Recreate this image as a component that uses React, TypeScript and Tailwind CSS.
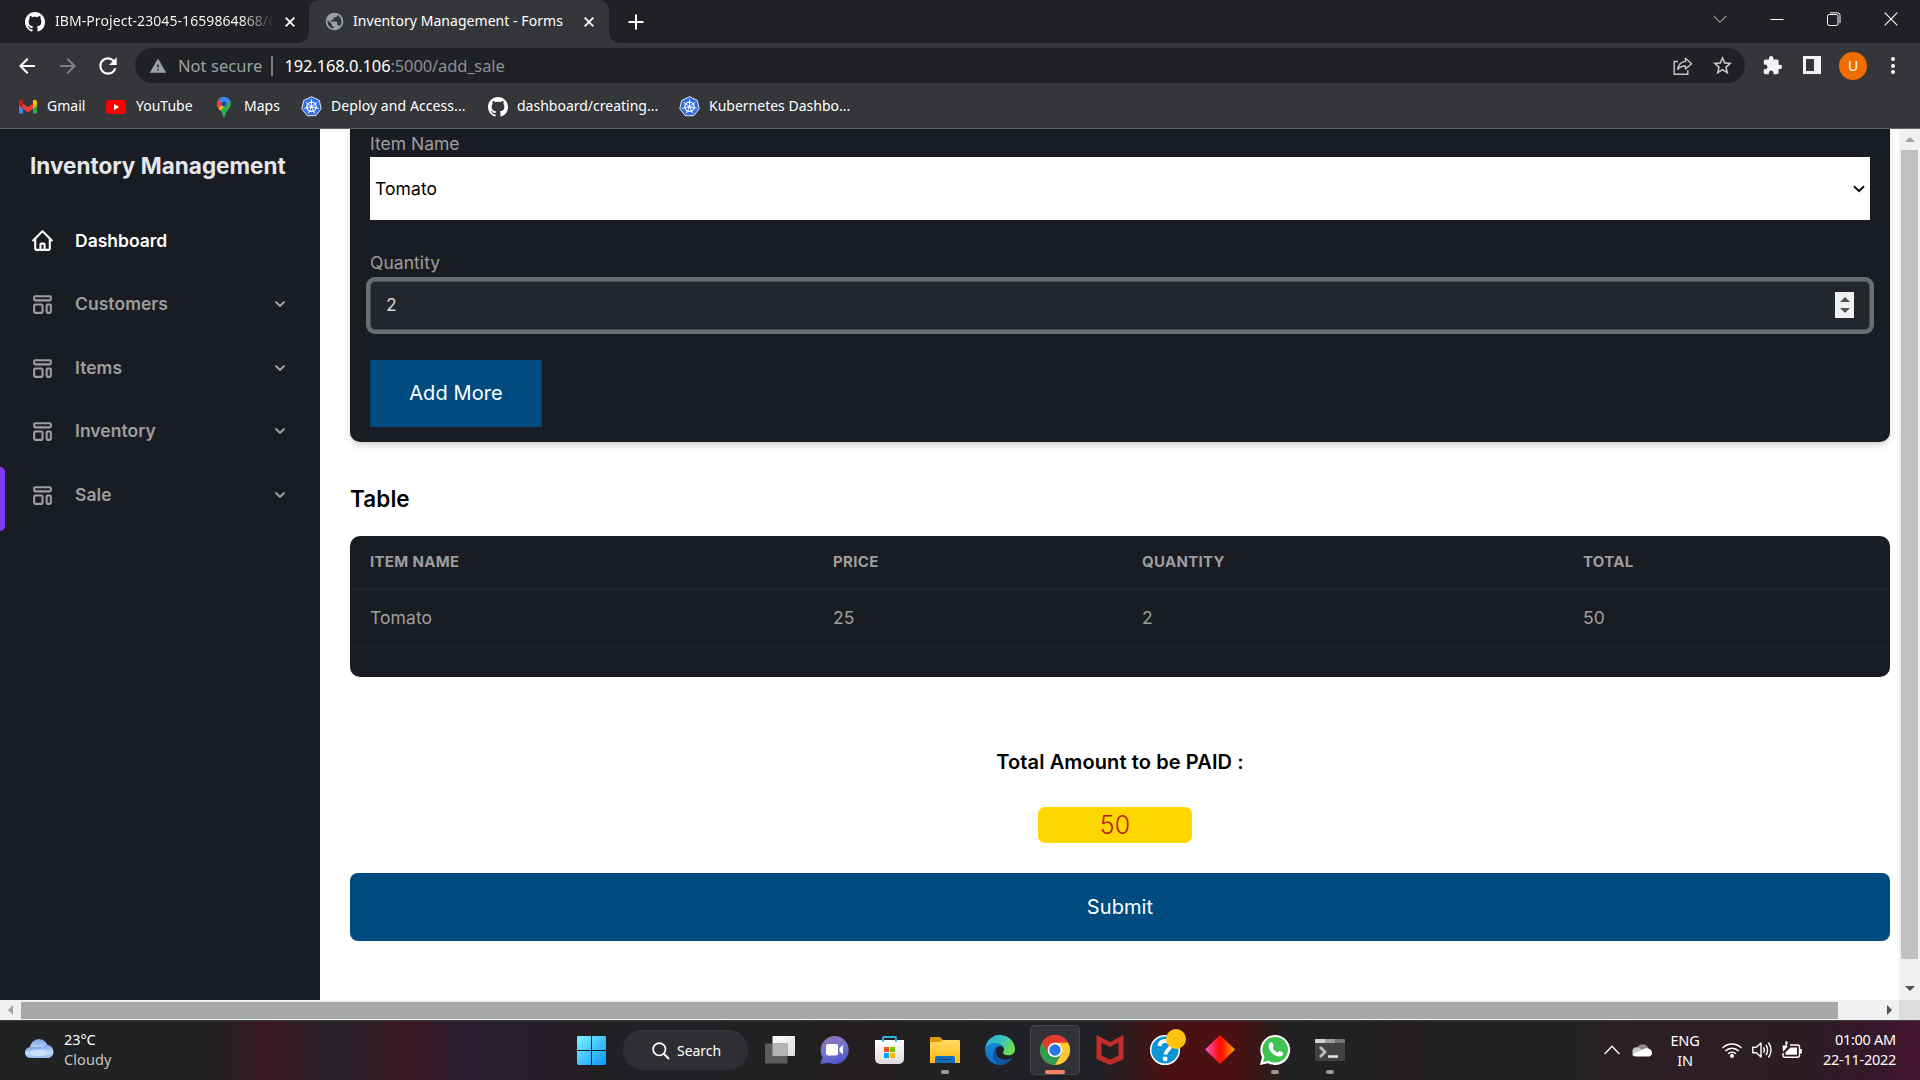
import React from 'react';
import { MdArrowBack, MdArrowForward, MdRefresh, MdWarning, MdStarBorder, MdExtension, MdPublic } from 'react-icons/md';

const GithubMark = ({ className = '' }: { className?: string }) => (
  <svg viewBox="0 0 16 16" className={`h-5 w-5 shrink-0 fill-white ${className}`}>
    <path d="M8 0C3.58 0 0 3.58 0 8c0 3.54 2.29 6.53 5.47 7.59.4.07.55-.17.55-.38 0-.19-.01-.82-.01-1.49-2.01.37-2.53-.49-2.69-.94-.09-.23-.48-.94-.82-1.13-.28-.15-.68-.52-.01-.53.63-.01 1.08.58 1.23.82.72 1.21 1.87.87 2.33.66.07-.52.28-.87.51-1.07-1.78-.2-3.64-.89-3.64-3.95 0-.87.31-1.59.82-2.15-.08-.2-.36-1.02.08-2.12 0 0 .67-.21 2.2.82.64-.18 1.32-.27 2-.27.68 0 1.36.09 2 .27 1.53-1.04 2.2-.82 2.2-.82.44 1.1.16 1.92.08 2.12.51.56.82 1.27.82 2.15 0 3.07-1.87 3.75-3.65 3.95.29.25.54.73.54 1.48 0 1.07-.01 1.93-.01 2.2 0 .21.15.46.55.38A8.013 8.013 0 0016 8c0-4.42-3.58-8-8-8z" />
  </svg>
);

const spokes = [0, 1, 2, 3, 4, 5, 6].map((i) => {
  const a = (i * 2 * Math.PI) / 7 - Math.PI / 2;
  return [12 + 8 * Math.cos(a), 12.3 + 8 * Math.sin(a)];
});

const KubeIcon = () => (
  <svg viewBox="0 0 24 24" className="h-[21px] w-[21px] shrink-0">
    <path d="M12 .8 20.9 5l2.2 9.600-6.200 7.900H7.100L.9 14.600 3.100 5z" fill="#326ce5" stroke="#fff" strokeWidth="1" strokeLinejoin="round" />
    <circle cx="12" cy="12.300" r="5.300" fill="none" stroke="#fff" strokeWidth="1.500" />
    {spokes.map(([x, y], i) => (
      <line key={i} x1="12" y1="12.300" x2={x} y2={y} stroke="#fff" strokeWidth="1.100" strokeLinecap="round" />
    ))}
    <circle cx="12" cy="12.300" r="1.500" fill="#fff" />
  </svg>
);

const CloseX = ({ className = '' }: { className?: string }) => (
  <svg viewBox="0 0 10 10" className={`h-[10px] w-[10px] shrink-0 ${className}`}>
    <path d="M.7.7l8.600 8.600M9.300.7L.7 9.300" stroke="#fff" strokeWidth="1.800" />
  </svg>
);

function TabStrip() {
  return (
    <div className="flex h-[43px] items-center bg-[#202124] text-[14px] text-white">
      <div className="flex h-full w-[309px] shrink-0 items-center pl-[25px]">
        <GithubMark />
        <div className="mb-[2px] ml-[10px] w-[219px] overflow-hidden whitespace-nowrap bg-gradient-to-r from-white from-85% to-transparent to-100% bg-clip-text tracking-[0.070px] text-transparent">
          IBM-Project-23045-1659864868/G
        </div>
        <CloseX className="ml-[11px]" />
      </div>
      <div className="relative flex h-full w-[300px] shrink-0 items-center rounded-t-[10px] bg-[#35363a] pl-4">
        <span className="absolute -left-[10px] bottom-0 h-[10px] w-[10px] bg-[radial-gradient(circle_at_0_0,#202124_9.500px,#35363a_10px)]" />
        <span className="absolute -right-[10px] bottom-0 h-[10px] w-[10px] bg-[radial-gradient(circle_at_100%_0,#202124_9.500px,#35363a_10px)]" />
        <MdPublic className="-ml-[1px] h-[21px] w-[21px] shrink-0 text-[#9aa0a6]" />
        <div className="mb-[2px] ml-[8px] w-[221px] whitespace-nowrap tracking-[0.050px]">Inventory Management - Forms</div>
        <CloseX className="ml-[10px]" />
      </div>
      <svg viewBox="0 0 16 16" className="ml-[19px] h-4 w-4">
        <path d="M8 .5v15M.5 8h15" stroke="#fff" strokeWidth="2" />
      </svg>
      <div className="mb-[6px] ml-auto flex items-center pr-[22px]">
        <svg viewBox="0 0 14 14" className="h-[14px] w-[14px]" fill="none" stroke="#ddd">
          <path d="M.7 4 7 10.300 13.300 4" />
        </svg>
        <svg viewBox="0 0 14 14" className="ml-[43px] h-[14px] w-[14px]" stroke="#fff">
          <path d="M.5 7.500h13" />
        </svg>
        <svg viewBox="0 0 14 14" className="ml-[43px] h-[14px] w-[14px]" fill="none" stroke="#fff">
          <rect x=".5" y="2.500" width="10.500" height="11" rx="1.800" />
          <path d="M3 .8h7.500a2.500 2.500 0 0 1 2.500 2.500V11" />
        </svg>
        <svg viewBox="0 0 14 14" className="ml-[43px] h-[14px] w-[14px]" stroke="#fff" strokeWidth="1.100">
          <path d="M.7.7l12.600 12.600M13.300.7L.7 13.300" />
        </svg>
      </div>
    </div>
  );
}

function AddressRow() {
  return (
    <div className="flex h-[45px] items-center">
      <MdArrowBack className="ml-[15px] h-6 w-6 shrink-0 text-white" />
      <MdArrowForward className="ml-[17px] h-6 w-6 shrink-0 text-[#7e8084]" />
      <MdRefresh className="ml-[15px] h-[26px] w-[26px] shrink-0 text-white" />
      <div className="ml-[14px] flex h-[35px] w-[1610px] shrink-0 items-center rounded-full bg-[#202124] text-[16.500px]">
        <MdWarning className="ml-[14px] h-[18px] w-[18px] shrink-0 text-[#9aa0a6]" />
        <div className="ml-[11px] w-[84px] whitespace-nowrap pt-[1px] tracking-[0.050px] text-[#9aa0a6]">Not secure</div>
        <div className="ml-[9px] h-5 w-[1.500px] bg-[#7c7f84]" />
        <div className="ml-3 whitespace-nowrap pt-[1px] tracking-[-0.130px] text-[#8c8f93]">
          <span className="text-white">192.168.0.106</span>:5000/add_sale
        </div>
        <svg viewBox="0 0 20 18" className="ml-auto h-[18px] w-5" fill="none" stroke="#c4c5c7" strokeWidth="1.400">
          <path d="M5 4.500H1.200v12.700h13.600v-4" />
          <path d="M12.500 1.200 18.600 6.700l-6.100 5.400V9C9 9 6.500 9.900 4.700 12.300 5.300 8 8 4.900 12.500 4.400z" strokeLinejoin="round" />
        </svg>
        <MdStarBorder className="ml-[18px] mr-[11px] h-[23px] w-[23px] text-[#c9cacc]" />
      </div>
      <MdExtension className="ml-[17px] h-[21px] w-[21px] shrink-0 text-[#f1f3f4]" />
      <div className="mb-[1px] ml-5 h-[18px] w-[18px] shrink-0 border-y-[3px] border-l-[3px] border-r-[7px] border-[#f1f3f4]" />
      <div className="ml-[18px] flex h-7 w-7 shrink-0 items-center justify-center rounded-full bg-[#ef6c00] text-[14px] text-white">U</div>
      <div className="ml-[24px] flex flex-col gap-[2.500px]">
        <i className="h-1 w-1 rounded-full bg-white" />
        <i className="h-1 w-1 rounded-full bg-white" />
        <i className="h-1 w-1 rounded-full bg-white" />
      </div>
    </div>
  );
}

function Bookmarks() {
  return (
    <div className="flex h-[37px] items-center whitespace-nowrap text-[14px] text-white">
      <svg viewBox="0 0 20 15" className="ml-[18px] h-[15px] w-5">
        <path d="M1 2v11.500q0 1 1 1h3V5z" fill="#4285f4" />
        <path d="M15 5v9.500h3q1 0 1-1V2z" fill="#34a853" />
        <path d="M5 4.500 10 8.300l5-3.800v5.200L10 13.500 5 9.700z" fill="#ea4335" />
        <path d="M1 3.500C1 .7 3.500 0 5 1.300v8.400L1 6.500z" fill="#c5221f" />
        <path d="M19 3.500C19 .7 16.500 0 15 1.300v8.400l4-3.200z" fill="#fbbc04" />
      </svg>
      <div className="mb-[2px] ml-[9px] w-[59px]">Gmail</div>
      <svg viewBox="0 0 20 14" className="h-[14px] w-5">
        <rect width="20" height="14" rx="3" fill="#f00" />
        <path d="M8 4v6l5.200-3z" fill="#fff" />
      </svg>
      <div className="mb-[2px] ml-[10px] w-[81px]">YouTube</div>
      <svg viewBox="0 0 14 20" className="h-5 w-[14px]">
        <defs>
          <clipPath id="pin">
            <path d="M7 0a7 7 0 0 1 7 7c0 4-5 6.500-6 12q-1 2-2 0C5 13.500 0 11 0 7a7 7 0 0 1 7-7z" />
          </clipPath>
        </defs>
        <g clipPath="url(#pin)">
          <path d="M0 0h14v20H0z" fill="#34a853" />
          <path d="M0 6.500h7L1.500 14H0z" fill="#fbbc04" />
          <path d="M-1 1 7 7l-5 5-3-1z" fill="#ea4335" />
          <path d="M2-1h13v5L7 8 1 2.500z" fill="#4285f4" />
          <path d="M0 12 8 5.500 9 8l-7 7z" fill="#fbbc04" />
        </g>
        <circle cx="7" cy="7" r="2.500" fill="#1d4fa8" />
      </svg>
      <div className="mb-[2px] ml-[13px] w-[57px]">Maps</div>
      <KubeIcon />
      <div className="mb-[2px] ml-[9px] w-[156.500px] tracking-[0.080px]">Deploy and Access...</div>
      <GithubMark />
      <div className="mb-[2px] ml-[9.500px] w-[162px]">dashboard/creating...</div>
      <KubeIcon />
      <div className="mb-[2px] ml-[9px]">Kubernetes Dashbo...</div>
    </div>
  );
}

const navItems = ['Customers', 'Items', 'Inventory', 'Sale'];

function Sidebar() {
  return (
    <aside className="flex w-[320px] shrink-0 flex-col bg-[#1a1c23] font-semibold">
      <div className="ml-[30px] mt-5 flex h-[34px] items-center whitespace-nowrap text-[22.500px] font-bold tracking-[0.010px] text-[#e5e7eb]">
        Inventory Management
      </div>
      <nav className="mt-[29.600px] flex flex-col text-[17.500px] text-[#9e9e9e]">
        <div className="flex h-[63.600px] items-start pl-[30px] pt-[15px] text-white">
          <svg viewBox="0 0 24 24" className="h-[25px] w-[25px]" fill="none" stroke="currentColor" strokeWidth="2" strokeLinecap="round" strokeLinejoin="round">
            <path d="M3 12l2-2m0 0l7-7 7 7M5 10v10a1 1 0 001 1h3m10-11l2 2m-2-2v10a1 1 0 01-1 1h-3m-6 0a1 1 0 001-1v-4a1 1 0 011-1h2a1 1 0 011 1v4a1 1 0 001 1m-6 0h6" />
          </svg>
          <span className="ml-5 leading-[25px]">Dashboard</span>
        </div>
        {navItems.map((name) => (
          <div key={name} className="relative flex h-[63.600px] items-start pl-[30px] pr-[30px] pt-[15px]">
            {name === 'Sale' && <span className="absolute left-0 top-0 h-full w-[5px] rounded-r-[5px] bg-[#7e3af2]" />}
            <svg viewBox="0 0 24 24" className="mt-[1px] h-[25px] w-[25px]" fill="none" stroke="currentColor" strokeWidth="2" strokeLinecap="round" strokeLinejoin="round">
              <path d="M4 5a1 1 0 011-1h14a1 1 0 011 1v2a1 1 0 01-1 1H5a1 1 0 01-1-1V5zM4 13a1 1 0 011-1h6a1 1 0 011 1v6a1 1 0 01-1 1H5a1 1 0 01-1-1v-6zM16 13a1 1 0 011-1h2a1 1 0 011 1v6a1 1 0 01-1 1h-2a1 1 0 01-1-1v-6z" />
            </svg>
            <span className="ml-5 leading-[25px] tracking-[0.050px]">{name}</span>
            <svg viewBox="0 0 20 20" className="ml-auto mt-[3px] h-5 w-5" fill="currentColor">
              <path fillRule="evenodd" d="M5.293 7.293a1 1 0 011.414 0L10 10.586l3.293-3.293a1 1 0 111.414 1.414l-4 4a1 1 0 01-1.414 0l-4-4a1 1 0 010-1.414z" clipRule="evenodd" />
            </svg>
          </div>
        ))}
      </nav>
    </aside>
  );
}

const Tri = ({ dir, color }: { dir: 'up' | 'down' | 'left' | 'right'; color: string }) => {
  const d = { up: 'M0 7 5 2l5 5z', down: 'M0 3l5 5 5-5z', left: 'M7 0 2 5l5 5z', right: 'M3 0l5 5-5 5z' }[dir];
  return (
    <svg viewBox="0 0 10 10" className="h-[10px] w-[10px] shrink-0" fill={color}>
      <path d={d} />
    </svg>
  );
};

function Main() {
  return (
    <main className="flex w-[1579px] shrink-0 flex-col overflow-hidden bg-white pl-[30px] pr-[9px]">
      <section className="flex h-[313px] shrink-0 flex-col rounded-b-[10px] bg-[#1a1c23] px-5 text-[17.500px] text-[#9e9e9e] shadow-[0_5px_8px_-1px_rgba(0,0,0,0.12),0_2px_5px_-1px_rgba(0,0,0,0.08)]">
        <label className="h-7 leading-[29px]">Item Name</label>
        <div className="flex h-[63px] items-center bg-white pl-[5px] pr-[5px] text-black">
          <span className="pt-[2px] tracking-[0.080px]">Tomato</span>
          <svg viewBox="0 0 12 8" className="ml-auto h-2 w-3" fill="none" stroke="#111" strokeWidth="2">
            <path d="M1 1.200 6 6l5-4.800" />
          </svg>
        </div>
        <label className="mt-[29px] h-8 leading-[28px] tracking-[0.050px]">Quantity</label>
        <div className="flex h-[49px] items-center rounded-[5px] border border-[#4c4f52] bg-[#24262d] pl-[15px] pr-[15px] text-[#d5d6d7] ring-4 ring-[#6c6e70]">
          2
          <div className="mb-[1px] ml-auto flex h-[26px] w-[19px] flex-col items-center justify-center bg-[#f0f0f0]">
            <Tri dir="up" color="#505050" />
            <Tri dir="down" color="#505050" />
          </div>
        </div>
        <button className="mt-[30px] h-[67px] w-[172px] bg-[#004c80] pb-[1px] text-[20px] tracking-[0.100px] text-white">Add More</button>
      </section>
      <h4 className="mt-[42px] h-[30px] text-[22.500px] font-semibold leading-[30px] tracking-[0.080px] text-black">Table</h4>
      <section className="mt-[22px] h-[141px] shrink-0 overflow-hidden rounded-[10px] bg-[#1a1c23] text-[#9e9e9e]">
        <div className="grid h-[54px] grid-cols-[463px_309px_441px_1fr] items-center border-b-2 border-[#24262d] px-5 text-[15px] font-bold tracking-[0.320px]">
          <span>ITEM NAME</span>
          <span>PRICE</span>
          <span>QUANTITY</span>
          <span>TOTAL</span>
        </div>
        <div className="grid h-[57px] grid-cols-[463px_309px_441px_1fr] items-center border-b border-[#24262d] px-5 text-[17.500px] tracking-[0.080px]">
          <span>Tomato</span>
          <span>25</span>
          <span>2</span>
          <span>50</span>
        </div>
      </section>
      <div className="mt-[70px] h-[30px] text-center text-[20px] font-semibold leading-[30px] tracking-[0.110px] text-black">Total Amount to be PAID :</div>
      <div className="ml-[688px] mt-[30px] flex h-9 w-[154px] items-center justify-center rounded-[7px] bg-[#ffd700] pt-[1px] text-[25px] font-light text-[#b91c1c]">50</div>
      <button className="mt-[30px] h-[68px] shrink-0 rounded-[8px] bg-[#004c80] text-[20px] tracking-[0.100px] text-white">Submit</button>
    </main>
  );
}

const Slot = ({ children, dot, active }: { children: React.ReactNode; dot?: boolean; active?: boolean }) => (
  <div className={`relative flex h-[50px] w-[50px] shrink-0 items-center justify-center rounded-[5px] ${active ? 'border border-white/10 bg-white/8' : ''}`}>
    <svg viewBox="0 0 30 30" className="h-[30px] w-[30px] overflow-visible">
      {children}
    </svg>
    {dot && <i className="absolute bottom-[1px] h-1 w-2 rounded-full bg-[#9a9a9b]" />}
    {active && <i className="absolute bottom-0 h-1 w-5 rounded-full bg-[#f58062]" />}
  </div>
);

function Taskbar() {
  return (
    <div className="flex h-[60px] items-center border-t border-[#3d3e40] bg-[linear-gradient(90deg,#202223_0px,#202223_205px,#3a1823_268px,#27222a_335px,#3a1823_408px,#291e30_465px,#232024_600px,#202124_700px,#241f20_860px,#202124_1000px,#202124_1100px,#4a1112_1170px,#4a1112_1235px,#202124_1290px,#231f20_1400px,#202224_1560px,#2c1f25_1610px,#2d1c23_1800px,#35182a_1880px,#4a1430_1920px)] pb-[1px] text-[14.500px] text-white">
      <svg viewBox="0 0 30 20" className="ml-[25px] mt-[-2px] h-5 w-[30px] shrink-0">
        <defs>
          <linearGradient id="cl" x1="0" x2="0" y1="0" y2="1">
            <stop stopColor="#7ba3e8" />
            <stop offset=".6" stopColor="#c3daf8" />
            <stop offset="1" stopColor="#8fb4ee" />
          </linearGradient>
        </defs>
        <circle cx="14" cy="9" r="9" fill="url(#cl)" />
        <rect x="0" y="8" width="22" height="11" rx="5.500" fill="url(#cl)" />
        <path d="M16 19c-3-5 0-13 7-13a6.800 6.800 0 0 1 1 13z" fill="url(#cl)" />
        <ellipse cx="14" cy="14" rx="9" ry="3.500" fill="#cfe1fa" opacity=".8" />
      </svg>
      <div className="mb-[3px] ml-[9px] w-[508px] shrink-0 leading-5">
        <div className="tracking-[-0.100px]">23°C</div>
        <div className="tracking-[0.100px] text-[#c5c5c5]">Cloudy</div>
      </div>
      <svg viewBox="0 0 29 29" className="ml-[5px] h-[29px] w-[29px] shrink-0">
        <defs>
          <linearGradient id="win" gradientUnits="userSpaceOnUse" x1="0" y1="0" x2="29" y2="29">
            <stop stopColor="#7df3ff" />
            <stop offset="1" stopColor="#0a95ff" />
          </linearGradient>
        </defs>
        <path d="M1 0h13v14H0V1zM15 0h13l1 1v13H15zM0 15h14v14H1l-1-1zM15 15h14v13l-1 1H15z" fill="url(#win)" />
      </svg>
      <div className="ml-[17px] flex h-10 w-[125px] shrink-0 items-center rounded-full border-t border-white/5 bg-[#2f2f33]">
        <svg viewBox="0 0 18 18" className="ml-[29px] h-[18px] w-[18px]" fill="none" stroke="#fff" strokeWidth="1.700">
          <circle cx="7.300" cy="7.300" r="6.200" />
          <path d="m12 12 5 5" strokeWidth="2" />
        </svg>
        <span className="ml-[7px] text-[14px] tracking-[-0.050px]">Search</span>
      </div>
      <div className="ml-[7px] flex shrink-0 gap-[5px]">
        <Slot>
          <defs>
            <linearGradient id="tv" x1="0" y1="0" x2="1" y2="1">
              <stop stopColor="#fff" />
              <stop offset="1" stopColor="#ddd" />
            </linearGradient>
          </defs>
          <rect x="7.500" y="1" width="22.500" height="20" rx="1" fill="url(#tv)" />
          <rect x="0" y="8.500" width="22.500" height="20" rx="1" fill="#5c5c5c" />
          <rect x="7.500" y="8.500" width="15" height="12.500" fill="#b5b5b5" />
        </Slot>
        <Slot>
          <defs>
            <linearGradient id="chat" x1=".2" y1="0" x2=".6" y2="1">
              <stop stopColor="#9a6fb8" />
              <stop offset=".5" stopColor="#7177c8" />
              <stop offset="1" stopColor="#5153c9" />
            </linearGradient>
          </defs>
          <path d="M14.500 1a14 14 0 1 1-5 27L.3 28.700 2.500 22A14 14 0 0 1 14.500 1z" fill="url(#chat)" />
          <rect x="6" y="9" width="12" height="11.500" rx="2" fill="#fff" />
          <path d="M19.500 13 23 10v9.500l-3.500-3z" fill="#fff" />
        </Slot>
        <Slot>
          <defs>
            <linearGradient id="bag" x1="0" x2="0" y1="0" y2="1">
              <stop stopColor="#fff" />
              <stop offset="1" stopColor="#dcdcdc" />
            </linearGradient>
          </defs>
          <path d="M0 5h29v19a5 5 0 0 1-5 5H5a5 5 0 0 1-5-5z" fill="url(#bag)" />
          <path d="M8 7V2.500Q8 2 8.500 2h12q.5 0 .5.500V7" fill="none" stroke="#2ab4e8" strokeWidth="1.800" />
          <path d="M9 12h5v5H9z" fill="#f25022" />
          <path d="M15 12h5v5h-5z" fill="#7fba00" />
          <path d="M9 18h5v5H9z" fill="#00a4ef" />
          <path d="M15 18h5v5h-5z" fill="#ffb900" />
        </Slot>
        <Slot dot>
          <defs>
            <linearGradient id="fol" x1="0" x2="0" y1="0" y2="1">
              <stop stopColor="#ffdb63" />
              <stop offset="1" stopColor="#fbb915" />
            </linearGradient>
          </defs>
          <path d="M0 3q0-1 1-1h9l3 3h16v6H0z" fill="#dd9b0c" />
          <path d="M0 7h10l3-2h16q1 0 1 1v22H0z" fill="url(#fol)" />
          <path d="M5 28v-5q0-2 2-2h16q2 0 2 2v5z" fill="#0f6fbd" />
          <path d="M8.500 24.500h13" stroke="#0a4a8a" />
        </Slot>
        <Slot>
          <defs>
            <linearGradient id="e1" x1="0" y1="0" x2="1" y2=".4">
              <stop stopColor="#2aa8dc" />
              <stop offset=".55" stopColor="#36c5c4" />
              <stop offset="1" stopColor="#66e04f" />
            </linearGradient>
            <linearGradient id="e2" x1="0" y1="0" x2="0" y2="1">
              <stop stopColor="#1789d0" />
              <stop offset="1" stopColor="#0b6fc9" />
            </linearGradient>
          </defs>
          <path d="M.3 12A15 15 0 0 1 30 14c0 4-3 6.300-6.500 6.300-3.500 0-5.500-1.300-5.500-2.600 0-1 1-1.200 1-3.400 0-3-3-5.500-7-5.500C6 8.800 1.800 11 .2 15z" fill="url(#e1)" />
          <path d="M.1 15C.5 10.500 5 8 10 8c5.500 0 9 3 9 6.300 0-2-2-3.300-4-3.300-3.200 0-5.800 3-5.800 7 0 6 5 9.500 11 11A15 15 0 0 1 .1 15z" fill="url(#e2)" />
          <path d="M12.300 12.500c-2 3.500-1.300 7 .7 9.300 3.500 3.600 9.500 3.400 14.200.6-2 3.900-6.500 7.600-12.200 7.600C9.500 28 7 22 8.500 17c.7-2 2-3.700 3.800-4.500z" fill="#12549f" />
        </Slot>
        <Slot active>
          <circle cx="15" cy="15" r="15" fill="#ea4335" />
          <path d="M2 7.500A15 15 0 0 0 15 30l6.500-11.250L15 22.500 8.500 18.750z" fill="#2f9e4f" />
          <path d="M28 7.500A15 15 0 0 1 15 30l6.500-11.250V11L15 7.500z" fill="#fcc934" />
          <path d="M15 7.500h13A15 15 0 0 0 2 7.500l6.500 11.250z" fill="#e33b2e" />
          <circle cx="15" cy="15" r="7.300" fill="#fff" />
          <circle cx="15" cy="15" r="5.700" fill="#2b76ea" />
        </Slot>
        <Slot>
          <path d="M1.500 0 15 7 28.500 0v24L15 30 1.500 24zM6.500 7.500v13L15 24.700l8.500-4.200v-13L15 12z" fill="#c22c2b" fillRule="evenodd" />
        </Slot>
        <Slot>
          <circle cx="15" cy="15" r="14.300" fill="#0a95d6" stroke="#fff" strokeWidth="1.500" />
          <path d="M9.500 11c.3-3.500 2.500-5 5.700-5 3.400 0 5.600 1.800 5.600 4.500 0 4-5.300 4.300-5.300 9" fill="none" stroke="#fff" strokeWidth="3.800" />
          <circle cx="15.200" cy="24" r="2.400" fill="#fff" />
          <circle cx="26" cy="4" r="10" fill="#ffc20e" />
        </Slot>
        <Slot>
          <defs>
            <linearGradient id="dia" x1="0" x2="1" y1="0" y2="0">
              <stop stopColor="#f45bd0" />
              <stop offset=".45" stopColor="#ff1010" />
              <stop offset=".6" stopColor="#ff1a00" />
              <stop offset="1" stopColor="#ffb000" />
            </linearGradient>
          </defs>
          <path d="M15 0 30 14.500 15 29 0 14.500z" fill="url(#dia)" />
        </Slot>
        <Slot dot>
          <path d="M15 0a15 15 0 1 1-7 28.200L0 30l2-8A15 15 0 0 1 15 0z" fill="#fff" />
          <path d="M15.200 2a12.800 12.800 0 1 1-6.600 23.800L3 27.300l1.500-5.500A12.800 12.800 0 0 1 15.200 2z" fill="#3fc351" />
          <path d="M10.300 7.500c.8-.8 1.700-.6 2.100.2l1.300 2.800c.2.900-1.300 2-1 2.600 1 2 2.600 3.500 4.600 4.300.8.300 1.600-1.600 2.400-1.400l3 1.400c.8.400.5 2.200-.4 3-2 1.700-4.500 1.300-7.300-.2-2.600-1.500-4.800-3.800-5.900-6.500-.9-2.300-.5-4.500 1.200-6.200z" fill="#fff" />
        </Slot>
        <Slot dot>
          <path d="M0 5q0-1 1-1h28q1 0 1 1v21H0z" fill="#424242" />
          <path d="M0 8V5q0-1 1-1h9v4z" fill="#d2d2d2" />
          <path d="M10 4h10v4H10z" fill="#9e9e9e" />
          <path d="M20 4h9q1 0 1 1v3H20z" fill="#757575" />
          <path d="m5 12 5 5-5 5" fill="none" stroke="#bdbdbd" strokeWidth="2.800" />
          <path d="M13 21.500h10" stroke="#e8e8e8" strokeWidth="2.500" />
        </Slot>
      </div>
      <div className="ml-auto flex shrink-0 items-center pr-6">
        <svg viewBox="0 0 16 10" className="h-[10px] w-4" fill="none" stroke="#fff" strokeWidth="1.300">
          <path d="M.6 9 8 1.300 15.400 9" />
        </svg>
        <svg viewBox="0 0 20 14" className="ml-3 h-[14px] w-5">
          <path d="M5 8A6 6 0 0 1 16 4l1 6z" fill="#8f8a8d" />
          <path d="M4 13A4.500 4.500 0 0 1 3 4.500c3-1 5 .3 7 2.500l6 4z" fill="#c9c6c8" />
          <path d="M4 13.500c-2 0-4-1-3.600-2.500L13 5.500c4-1 7 1.500 7 4.500 0 2-1.300 3.500-3.500 3.500z" fill="#fff" />
        </svg>
        <div className="mb-[1px] ml-[17px] w-8 text-center text-[14.500px] leading-5 tracking-[-0.200px]">
          <div>ENG</div>
          <div>IN</div>
        </div>
        <svg viewBox="0 0 20 16" className="ml-[21px] h-4 w-5" fill="none" stroke="#fff" strokeWidth="1.500">
          <path d="M.6 6a13.300 13.300 0 0 1 18.800 0M3.300 9a9.500 9.500 0 0 1 13.400 0M6 11.800a5.700 5.700 0 0 1 8 0" />
          <circle cx="10" cy="14" r="2" fill="#fff" stroke="none" />
        </svg>
        <svg viewBox="0 0 20 18" className="ml-[10px] h-[18px] w-5" fill="none" stroke="#fff" strokeWidth="1.400">
          <path d="M.8 6.300h3.500L9 2v14l-4.700-4.300H.8z" strokeLinejoin="round" />
          <path d="M11.500 6.300q1.700 2.700 0 5.400M14 4q3.200 5 0 10M16.500 1.500q5 7.500 0 15" />
        </svg>
        <svg viewBox="0 0 20 18" className="ml-[10px] h-[18px] w-5" fill="none" stroke="#fff" strokeWidth="1.400">
          <path d="M8 4h7.500q2 0 2 2v8.300q0 2-2 2H3q-2 0-2-2V12" />
          <path d="M8.500 6.500h6.500v7.300H3.500v-2.500z" fill="#fff" stroke="none" />
          <path d="M18.800 8v4.500" strokeWidth="2" />
          <path d="M3.500 0v4.500h-3L1 11l5-6H4.500L6 1z" fill="#fff" stroke="none" />
        </svg>
        <div className="mb-[3px] ml-[18px] w-[76px] whitespace-nowrap text-right leading-5 tracking-[-0.270px]">
          <div>01:00 AM</div>
          <div className="-ml-3">22-11-2022</div>
        </div>
      </div>
    </div>
  );
}

export default function App() {
  return (
    <div className="flex h-[1080px] w-[1920px] flex-col overflow-hidden bg-white font-['Noto_Sans','Open_Sans',sans-serif]">
      <TabStrip />
      <div className="h-[86px] shrink-0 border-b border-[#5f6165] bg-[#35363a]">
        <AddressRow />
        <Bookmarks />
      </div>
      <div className="flex h-[871px] shrink-0 overflow-hidden font-['Inter',sans-serif]">
        <Sidebar />
        <Main />
        <div className="flex w-[21px] shrink-0 flex-col items-center bg-[#f1f1f1]">
          <div className="flex h-[21px] shrink-0 items-end pb-[5px]">
            <Tri dir="up" color="#a3a3a3" />
          </div>
          <div className="h-[809px] w-[17px] shrink-0 bg-[#c1c1c1]" />
          <div className="mt-auto flex h-[17px] items-start">
            <Tri dir="down" color="#505050" />
          </div>
        </div>
      </div>
      <div className="flex h-5 shrink-0 items-center bg-[#f1f1f1]">
        <div className="flex w-[21px] justify-center">
          <Tri dir="left" color="#a3a3a3" />
        </div>
        <div className="h-[17px] w-[1817px] bg-[#a8a8a8]" />
        <div className="ml-auto flex w-[21px] justify-center">
          <Tri dir="right" color="#505050" />
        </div>
        <div className="h-5 w-[21px] bg-[#dcdcdc]" />
      </div>
      <Taskbar />
    </div>
  );
}
